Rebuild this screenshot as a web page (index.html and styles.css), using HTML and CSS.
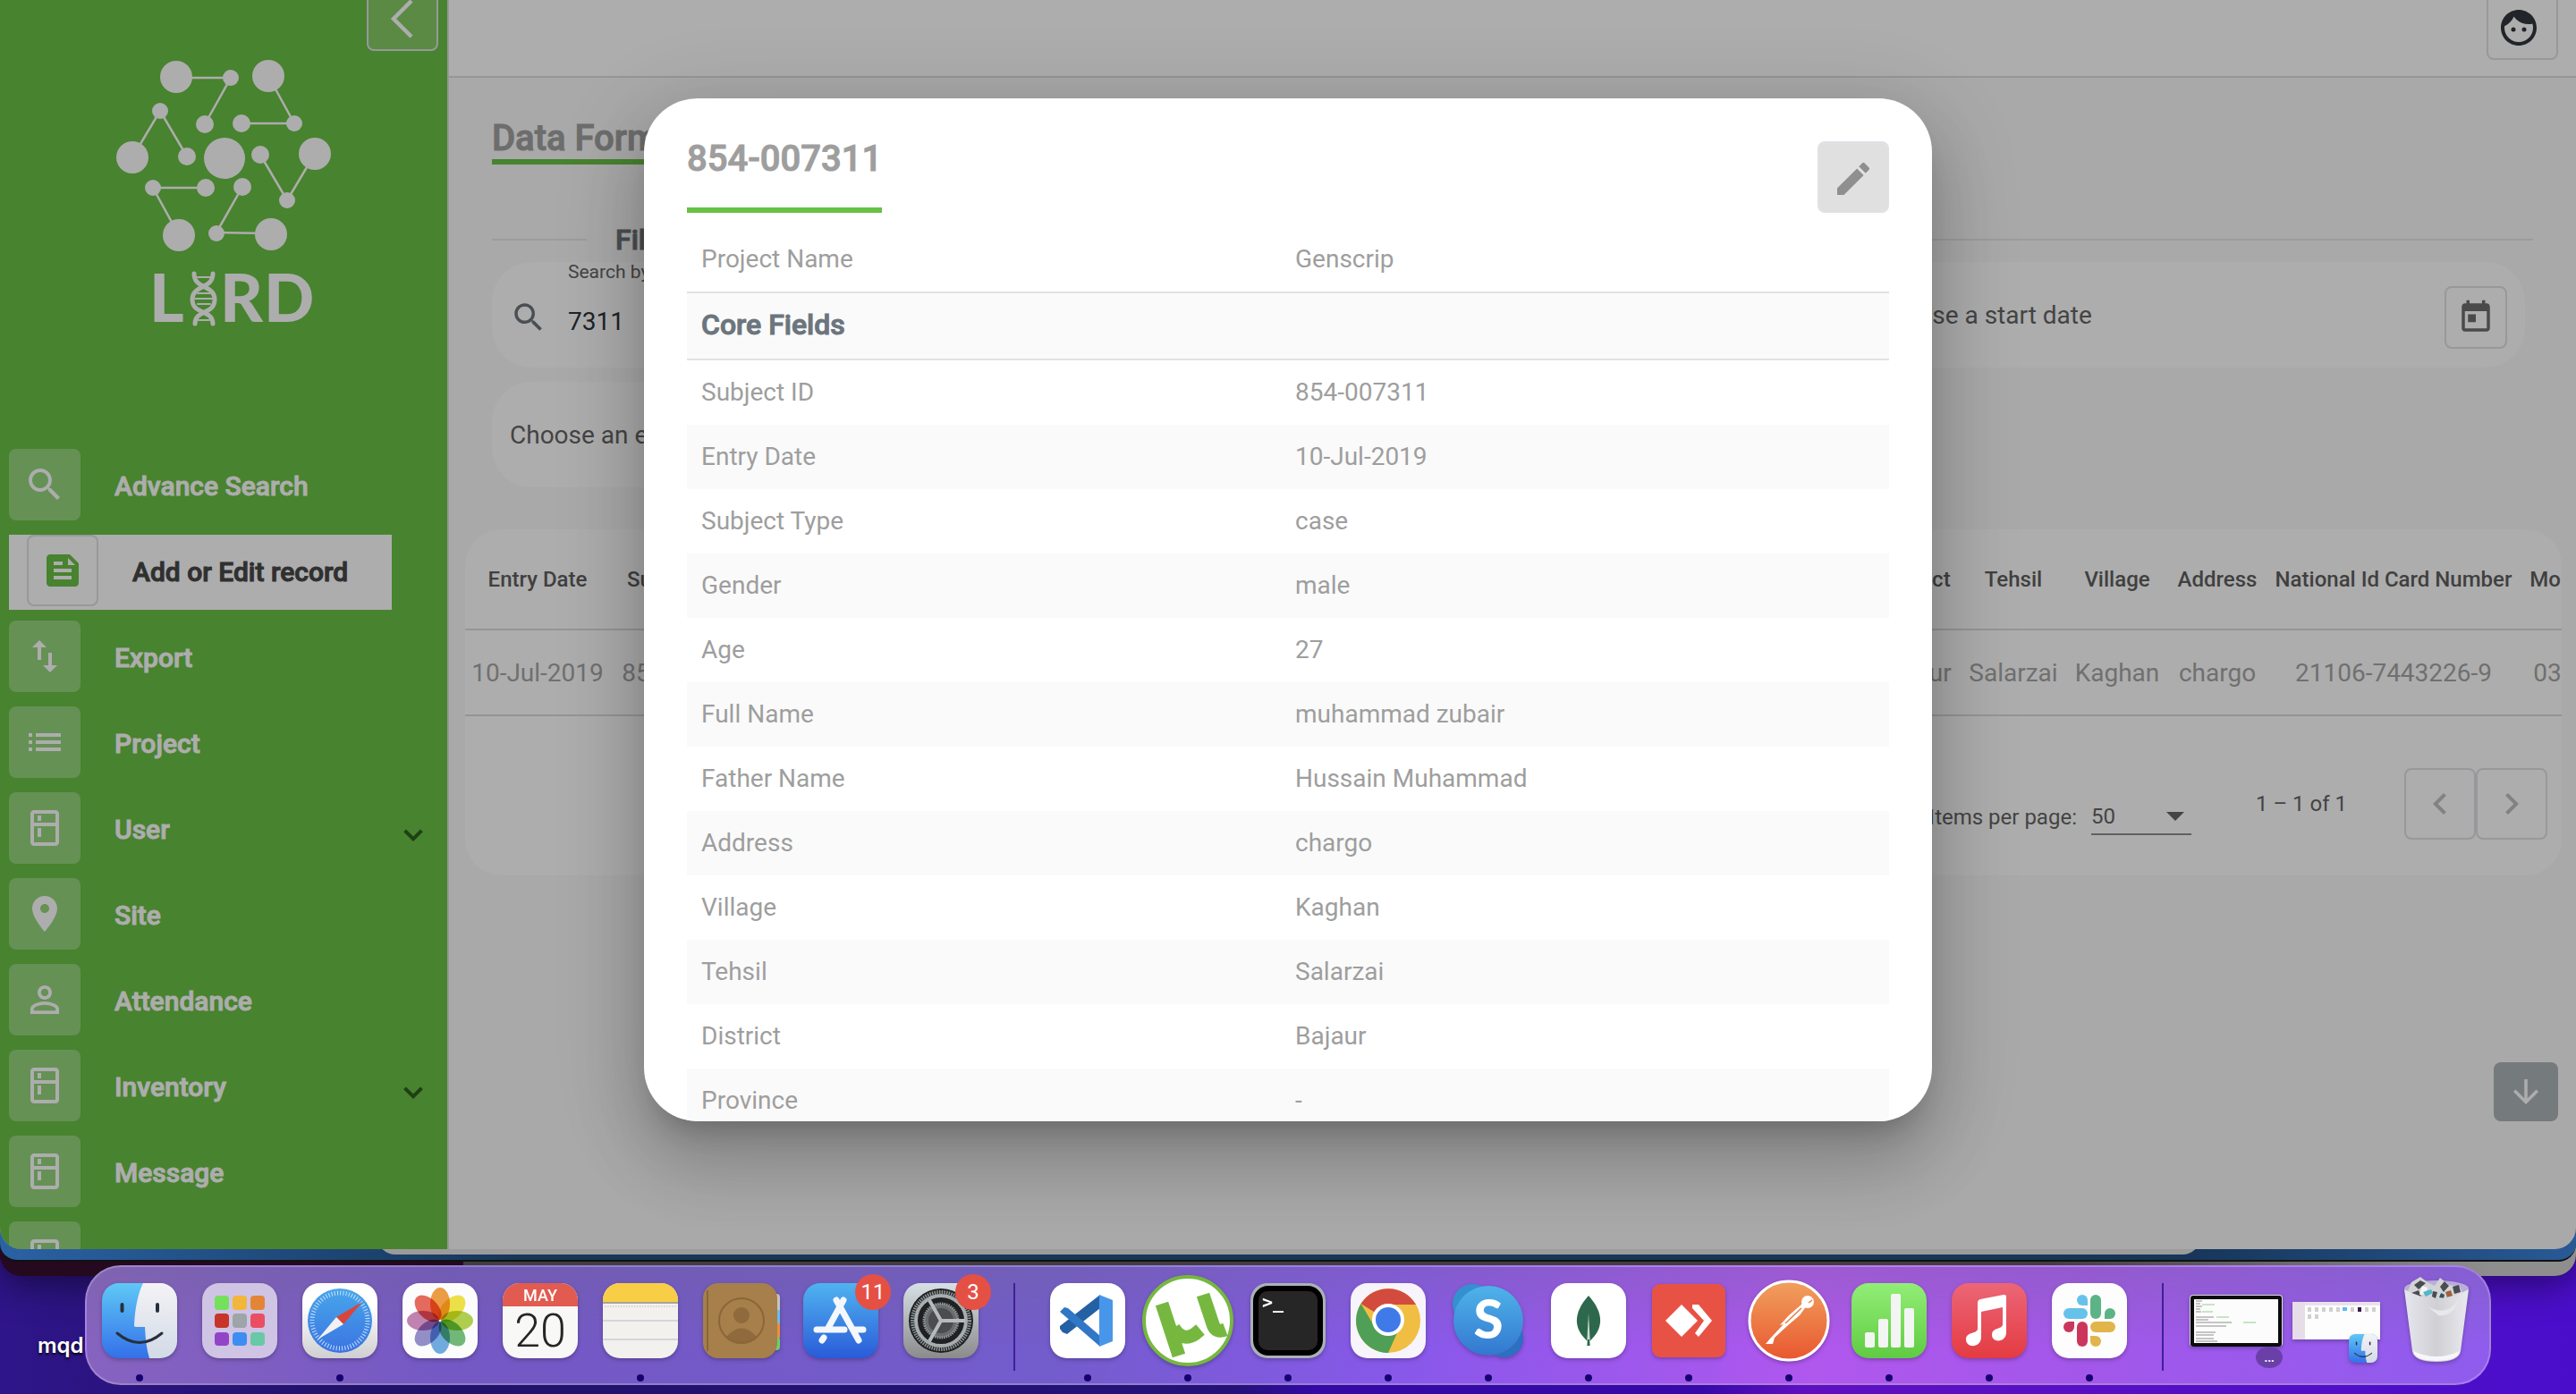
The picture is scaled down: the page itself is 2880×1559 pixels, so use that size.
FILE: index.html
```html
<!DOCTYPE html>
<html lang="en">
<head>
<meta charset="utf-8">
<title>LIRD - Data Forms</title>
<link rel="stylesheet" href="styles.css">
</head>
<body>
<svg class="sprite" aria-hidden="true">
  <symbol id="i-search" viewBox="0 0 24 24"><path d="M15.5 14h-.79l-.28-.27C15.41 12.59 16 11.11 16 9.5 16 5.91 13.09 3 9.5 3S3 5.91 3 9.5 5.91 16 9.5 16c1.61 0 3.09-.59 4.23-1.57l.27.28v.79l5 4.99L20.49 19l-4.99-5zm-6 0C7.01 14 5 11.99 5 9.5S7.01 5 9.5 5 14 7.01 14 9.5 11.99 14 9.5 14z"/></symbol>
  <symbol id="i-feed" viewBox="0 0 24 24"><path d="M16 3H5c-1.1 0-2 .9-2 2v14c0 1.1.9 2 2 2h14c1.1 0 2-.9 2-2V8l-5-5zM7 7h5v2H7V7zm10 10H7v-2h10v2zm0-4H7v-2h10v2zm-2-4V5l4 4h-4z"/></symbol>
  <symbol id="i-export" viewBox="0 0 24 24"><path d="M9 3 5 6.99h3V14h2V6.99h3L9 3zm7 14.01V10h-2v7.01h-3L15 21l4-3.99h-3z"/></symbol>
  <symbol id="i-list" viewBox="0 0 24 24"><path d="M3 13h2v-2H3v2zm0 4h2v-2H3v2zm0-8h2V7H3v2zm4 4h14v-2H7v2zm0 4h14v-2H7v2zM7 7v2h14V7H7z"/></symbol>
  <symbol id="i-kitchen" viewBox="0 0 24 24"><path d="M18 2.01 6 2c-1.1 0-2 .89-2 2v16c0 1.1.9 2 2 2h12c1.1 0 2-.9 2-2V4c0-1.11-.9-1.99-2-1.99zM18 20H6v-9.02h12V20zm0-11H6V4h12v5zM8 5h2v3H8zM8 12h2v5H8z"/></symbol>
  <symbol id="i-place" viewBox="0 0 24 24"><path d="M12 2C8.13 2 5 5.13 5 9c0 5.25 7 13 7 13s7-7.75 7-13c0-3.87-3.13-7-7-7zm0 9.5c-1.38 0-2.5-1.12-2.5-2.5s1.12-2.5 2.5-2.5 2.5 1.12 2.5 2.5-1.12 2.5-2.5 2.5z"/></symbol>
  <symbol id="i-person" viewBox="0 0 24 24"><path d="M12 5.9c1.16 0 2.1.94 2.1 2.1s-.94 2.1-2.1 2.1S9.9 9.16 9.9 8s.94-2.1 2.1-2.1m0 9c2.97 0 6.1 1.46 6.1 2.1v1.1H5.9V17c0-.64 3.13-2.1 6.1-2.1M12 4C9.79 4 8 5.79 8 8s1.79 4 4 4 4-1.79 4-4-1.79-4-4-4zm0 9c-2.67 0-8 1.34-8 4v3h16v-3c0-2.66-5.33-4-8-4z"/></symbol>
  <symbol id="i-face" viewBox="0 0 24 24"><path d="M9 11.75a1.25 1.25 0 1 0 0 2.5 1.25 1.25 0 0 0 0-2.5zm6 0a1.25 1.25 0 1 0 0 2.5 1.25 1.25 0 0 0 0-2.5zM12 2C6.48 2 2 6.48 2 12s4.48 10 10 10 10-4.48 10-10S17.52 2 12 2zm0 18c-4.41 0-8-3.59-8-8 0-.29.02-.58.05-.86 2.36-1.05 4.23-2.98 5.21-5.37a9.974 9.974 0 0 0 10.41 3.97c.21.71.33 1.47.33 2.26 0 4.41-3.59 8-8 8z"/></symbol>
  <symbol id="i-edit" viewBox="0 0 24 24"><path d="M3 17.25V21h3.75L17.81 9.94l-3.75-3.75L3 17.25zM20.71 7.04a.996.996 0 0 0 0-1.41l-2.34-2.34a.996.996 0 0 0-1.41 0l-1.83 1.83 3.75 3.75 1.83-1.83z"/></symbol>
  <symbol id="i-today" viewBox="0 0 24 24"><path d="M19 3h-1V1h-2v2H8V1H6v2H5c-1.11 0-1.99.9-1.99 2L3 19c0 1.1.89 2 2 2h14c1.1 0 2-.9 2-2V5c0-1.1-.9-2-2-2zm0 16H5V8h14v11zM7 10h5v5H7z"/></symbol>
  <symbol id="i-down" viewBox="0 0 24 24"><path d="M12 15.5 6.6 10.1 8 8.7l4 4 4-4 1.4 1.4z"/></symbol>
  <symbol id="finder" viewBox="0 0 84 84">
    <defs>
      <linearGradient id="fb" x2="0" y2="1"><stop stop-color="#5fc8f5"/><stop offset="1" stop-color="#3470ea"/></linearGradient>
      <linearGradient id="fw" x2="0" y2="1"><stop stop-color="#f4f3f6"/><stop offset="1" stop-color="#d2dae6"/></linearGradient>
    </defs>
    <rect width="84" height="84" rx="19" fill="url(#fb)"/>
    <path d="M46 0h19a19 19 0 0 1 19 19v46a19 19 0 0 1-19 19H53c-3-10-4.500-22-5-35H38c-1.500 0-2-.8-2-2C37 28 40 12 46 0z" fill="url(#fw)"/>
    <path d="M22.500 24v7M62 24v7" stroke="#26303c" stroke-width="4" stroke-linecap="round"/>
    <path d="M17 56q25 21 50 0" fill="none" stroke="#26303c" stroke-width="3" stroke-linecap="round"/>
  </symbol>
</svg>

<div class="desktop">
  <div class="win win-dark"></div>
  <div class="win win-grey"></div>
  <div class="win win-blue"></div>
  <div class="win win-strip"></div>
  <span class="desk-label">mqd</span>

  <div class="window">
    <aside class="sidebar">
      <button class="collapse" aria-label="Collapse menu"><svg width="80" height="80" viewBox="0 0 80 80" fill="none" stroke="#adadad" stroke-width="4.500"><path d="M50 24 30 44l20 20"/></svg></button>
      <svg class="logo" width="250" height="310" viewBox="125 60 250 310" role="img" aria-label="LIRD">
        <g stroke="#adadad" stroke-width="2.500" fill="none">
          <path d="M197 87h61l-29 52M300 85l29 53h-59M148 176l31-52 30 51M291 173l30 51 31-52M230 210h-59l29 53M271 209l-29 51 60 1"/>
        </g>
        <g fill="#adadad">
          <circle cx="197" cy="86" r="18"/><circle cx="258" cy="87" r="9"/><circle cx="229" cy="139" r="10"/>
          <circle cx="300" cy="85" r="18"/><circle cx="329" cy="138" r="9"/><circle cx="270" cy="138" r="10"/>
          <circle cx="179" cy="124" r="9"/><circle cx="148" cy="176" r="18"/><circle cx="209" cy="175" r="10"/>
          <circle cx="251" cy="177" r="23"/><circle cx="291" cy="173" r="10"/><circle cx="352" cy="172" r="18"/>
          <circle cx="321" cy="224" r="9"/><circle cx="171" cy="210" r="9"/><circle cx="230" cy="210" r="10"/>
          <circle cx="200" cy="263" r="18"/><circle cx="271" cy="209" r="10"/><circle cx="242" cy="261" r="9"/>
          <circle cx="303" cy="262" r="18"/>
        </g>
        <g fill="none" stroke="#adadad" stroke-width="5" stroke-linecap="round">
          <path d="M217 306c0 18 23 12 23 29s-22 11-22 27M238 306c0 18-23 12-23 29s23 11 23 27"/>
          <path d="M221 310h14M221 328h14M218 334h19M221 340h14M222 358h12" stroke-width="2"/>
        </g>
        <g class="logo-text"><text x="167" y="360">L</text><text x="246" y="360">R</text><text x="295" y="360">D</text></g>
      </svg>
      <nav>
        <ul class="menu">
          <li><a href="#"><span class="tile"><svg><use href="#i-search"/></svg></span>Advance Search</a></li>
          <li><a href="#" class="active"><span class="tile"><svg><use href="#i-feed"/></svg></span>Add or Edit record</a></li>
          <li><a href="#"><span class="tile"><svg><use href="#i-export"/></svg></span>Export</a></li>
          <li><a href="#"><span class="tile"><svg><use href="#i-list"/></svg></span>Project</a></li>
          <li><a href="#"><span class="tile"><svg><use href="#i-kitchen"/></svg></span>User<svg class="caret"><use href="#i-down"/></svg></a></li>
          <li><a href="#"><span class="tile"><svg><use href="#i-place"/></svg></span>Site</a></li>
          <li><a href="#"><span class="tile"><svg><use href="#i-person"/></svg></span>Attendance</a></li>
          <li><a href="#"><span class="tile"><svg><use href="#i-kitchen"/></svg></span>Inventory<svg class="caret"><use href="#i-down"/></svg></a></li>
          <li><a href="#"><span class="tile"><svg><use href="#i-kitchen"/></svg></span>Message</a></li>
          <li><a href="#" aria-label="More"><span class="tile"><svg><use href="#i-kitchen"/></svg></span></a></li>
        </ul>
      </nav>
    </aside>

    <main class="main">
      <header class="topbar"><button class="avatar" aria-label="Account"><svg><use href="#i-face"/></svg></button></header>
      <div class="page">
        <h1 class="title">Data Forms</h1>
        <div class="legend"><h2>Filters</h2></div>
        <form class="filters">
          <div class="field">
            <svg class="lens"><use href="#i-search"/></svg>
            <div class="stack"><label for="q">Search by Id</label><input id="q" type="text" value="7311"></div>
          </div>
          <div class="field"><input type="text" aria-label="Status" placeholder="Status"></div>
          <div class="field"><input type="text" aria-label="Start date" placeholder="Choose a start date"><button type="button" class="cal" aria-label="Open calendar"><svg><use href="#i-today"/></svg></button></div>
          <div class="field"><input type="text" aria-label="End date" placeholder="Choose an end date"></div>
        </form>
        <section class="card">
          <table class="records">
            <colgroup><col class="c-date"><col class="c-id"><col><col><col><col><col><col><col class="c-district"><col class="c-tehsil"><col class="c-village"><col class="c-address"><col class="c-nic"><col class="c-mobile"></colgroup>
            <thead><tr><th>Entry Date</th><th>Subject Type</th><th>Subject ID</th><th>Gender</th><th>Age</th><th>Full Name</th><th>Father Name</th><th>Province</th><th>District</th><th>Tehsil</th><th>Village</th><th>Address</th><th>National Id Card Number</th><th>Mobile Number</th></tr></thead>
            <tbody><tr><td>10-Jul-2019</td><td>854-007311</td><td>case</td><td>male</td><td>27</td><td>muhammad</td><td>Hussain</td><td>-</td><td>Bajaur</td><td>Salarzai</td><td>Kaghan</td><td>chargo</td><td>21106-7443226-9</td><td>0300000000</td></tr></tbody>
          </table>
          <div class="pager">
            <div class="per-page"><label for="pp">Items per page:</label>
              <div class="select"><select id="pp"><option>50</option></select><span class="arrow"></span></div></div>
            <span class="range">1 – 1 of 1</span>
            <div class="steps">
              <button aria-label="Previous page"><svg width="48" height="48" viewBox="0 0 24 24"><path d="M15.410 7.410 14 6l-6 6 6 6 1.410-1.410L10.830 12z"/></svg></button>
              <button aria-label="Next page"><svg width="48" height="48" viewBox="0 0 24 24"><path d="M10 6 8.590 7.410 13.170 12l-4.580 4.590L10 18l6-6z"/></svg></button>
            </div>
          </div>
        </section>
      </div>
    </main>

    <button class="fab" aria-label="Scroll down"><svg width="48" height="48" viewBox="0 0 24 24"><path d="m20 12-1.410-1.410L13 16.170V4h-2v12.170l-5.580-5.590L4 12l8 8z"/></svg></button>

    <div class="dialog" role="dialog" aria-labelledby="dlg">
      <div class="dialog-head"><h2 id="dlg">854-007311</h2><button class="edit" aria-label="Edit"><svg><use href="#i-edit"/></svg></button></div>
      <table class="details">
        <tbody>
          <tr><th>Project Name</th><td>Genscrip</td></tr>
          <tr class="group"><th colspan="2">Core Fields</th></tr>
          <tr><th>Subject ID</th><td>854-007311</td></tr>
          <tr><th>Entry Date</th><td>10-Jul-2019</td></tr>
          <tr><th>Subject Type</th><td>case</td></tr>
          <tr><th>Gender</th><td>male</td></tr>
          <tr><th>Age</th><td>27</td></tr>
          <tr><th>Full Name</th><td>muhammad zubair</td></tr>
          <tr><th>Father Name</th><td>Hussain Muhammad</td></tr>
          <tr><th>Address</th><td>chargo</td></tr>
          <tr><th>Village</th><td>Kaghan</td></tr>
          <tr><th>Tehsil</th><td>Salarzai</td></tr>
          <tr><th>District</th><td>Bajaur</td></tr>
          <tr><th>Province</th><td>-</td></tr>
        </tbody>
      </table>
    </div>
  </div>

  <div class="dock">
    <div class="app on"><svg viewBox="0 0 84 84"><use href="#finder"/></svg></div>
    <div class="app"><svg viewBox="0 0 84 84"><rect width="84" height="84" rx="19" fill="#cfc4e4"/>
      <rect x="14" y="14" width="16" height="16" rx="4" fill="#74e05c"/><rect x="34" y="14" width="16" height="16" rx="4" fill="#f2b63c"/><rect x="54" y="14" width="16" height="16" rx="4" fill="#e38537"/>
      <rect x="14" y="34" width="16" height="16" rx="4" fill="#c7342a"/><rect x="34" y="34" width="16" height="16" rx="4" fill="#9ea4a8"/><rect x="54" y="34" width="16" height="16" rx="4" fill="#ea4e63"/>
      <rect x="14" y="55" width="16" height="15" rx="4" fill="#9244c8"/><rect x="34" y="55" width="16" height="15" rx="4" fill="#3d8df2"/><rect x="54" y="55" width="16" height="15" rx="4" fill="#69c8a6"/></svg></div>
    <div class="app on"><svg viewBox="0 0 84 84">
      <defs><linearGradient id="sw" x2="0" y2="1"><stop offset=".3" stop-color="#fff"/><stop offset="1" stop-color="#cfcfd1"/></linearGradient><linearGradient id="sb" x2="0" y2="1"><stop stop-color="#48a6ea"/><stop offset="1" stop-color="#3a74e2"/></linearGradient></defs>
      <rect width="84" height="84" rx="19" fill="url(#sw)"/><circle cx="42" cy="42" r="36" fill="url(#sb)"/>
      <circle cx="42" cy="42" r="31" fill="none" stroke="#c9e0f8" stroke-width="5" stroke-dasharray="1 2.246"/>
      <path d="M67 21 38 38l8 8z" fill="#d8463a"/><path d="M17 63 38 38l8 8z" fill="#f1f1f1"/></svg></div>
    <div class="app"><svg viewBox="0 0 84 84"><rect width="84" height="84" rx="19" fill="#fcfcfc"/>
      <g class="petals"><ellipse cx="42" cy="23" rx="11" ry="18" fill="#ee9430"/><ellipse cx="42" cy="23" rx="11" ry="18" fill="#efdf35" transform="rotate(45 42 42)"/><ellipse cx="42" cy="23" rx="11" ry="18" fill="#a9cc3d" transform="rotate(90 42 42)"/><ellipse cx="42" cy="23" rx="11" ry="18" fill="#62b36a" transform="rotate(135 42 42)"/><ellipse cx="42" cy="23" rx="11" ry="18" fill="#62a3dc" transform="rotate(180 42 42)"/><ellipse cx="42" cy="23" rx="11" ry="18" fill="#8b84c4" transform="rotate(225 42 42)"/><ellipse cx="42" cy="23" rx="11" ry="18" fill="#bd76ab" transform="rotate(270 42 42)"/><ellipse cx="42" cy="23" rx="11" ry="18" fill="#e65a4c" transform="rotate(315 42 42)"/></g></svg></div>
    <div class="app"><svg viewBox="0 0 84 84"><rect width="84" height="84" rx="19" fill="#f8f8f7"/><path d="M0 26v-7A19 19 0 0 1 19 0h46a19 19 0 0 1 19 19v7z" fill="#e15b50"/><text class="t-may" x="42" y="20">MAY</text><text class="t-day" x="42" y="71">20</text></svg></div>
    <div class="app on"><svg viewBox="0 0 84 84"><rect width="84" height="84" rx="19" fill="#f2f1ee"/><path d="M0 21v-2A19 19 0 0 1 19 0h46a19 19 0 0 1 19 19v2z" fill="#f8ce46"/><path d="M0 22h84" stroke="#a9a39a" stroke-width="2"/><path d="M2 26h80" stroke="#bdbbb8" stroke-dasharray="1.500 1.500"/><path d="M0 42h84M0 63h84" stroke="#d6d5d9" stroke-width="2"/></svg></div>
    <div class="app"><svg viewBox="0 0 84 84"><rect x="70" y="12" width="16" height="22" rx="4" fill="#c4c4c0"/><rect x="70" y="30" width="16" height="16" fill="#6cbde8"/><rect x="70" y="45" width="16" height="16" fill="#ec8f37"/><rect x="70" y="60" width="16" height="15" rx="4" fill="#6fcf6b"/><rect width="83" height="84" rx="17" fill="#a67f4b"/><path d="M5 8v68" stroke="#8a6638" stroke-width="2"/><g fill="#8f6a3c"><circle cx="43" cy="36" r="9"/><path d="M26 60q17-19 34 0-17 14-34 0z"/></g><circle cx="43" cy="42" r="25" fill="none" stroke="#8a6638" stroke-width="2"/></svg></div>
    <div class="app"><svg viewBox="0 0 84 84"><defs><linearGradient id="as" x2="0" y2="1"><stop stop-color="#50b3f0"/><stop offset="1" stop-color="#2a5bd8"/></linearGradient></defs><rect width="84" height="84" rx="19" fill="url(#as)"/><g stroke="#f4f7fb" stroke-width="7" stroke-linecap="round"><path d="M45 19 28 50M37 19l25 45M15 52h31M58 52h9M23 61l-2 3"/></g></svg><span class="badge">11</span></div>
    <div class="app"><svg viewBox="0 0 84 84"><defs><linearGradient id="sp" x2="0" y2="1"><stop stop-color="#d7e0e6"/><stop offset="1" stop-color="#8b8b8b"/></linearGradient></defs><rect width="84" height="84" rx="19" fill="url(#sp)"/><circle cx="42" cy="42" r="36" fill="#1f2122"/><circle cx="42" cy="42" r="32" fill="none" stroke="#8f9698" stroke-width="4" stroke-dasharray="1.500 1.200"/><circle cx="42" cy="42" r="28" fill="none" stroke="#a7adaf" stroke-width="4"/><circle cx="42" cy="42" r="19" fill="#6a6d6e" stroke="#929799" stroke-width="3" stroke-dasharray="1.500 1"/><circle cx="42" cy="42" r="14" fill="#4a4c4d"/><path d="M42 42h27M42 42 29 19M42 42 29 65" stroke="#b5bbbd" stroke-width="4"/></svg><span class="badge">3</span></div>
    <span class="split"></span>
    <div class="app on"><svg viewBox="0 0 84 84"><rect width="84" height="84" rx="19" fill="#fff"/><path d="M56 13v15L19 57l-5-2-3-4v-3z" fill="#2461a4"/><path d="M11 32l5-5 4 1 36 31v12z" fill="#3177c6"/><path d="M55 13l15 6v46l-15 6z" fill="#4896ea"/></svg></div>
    <div class="app on"><svg class="over" viewBox="0 0 102 102"><circle cx="51" cy="51" r="49" fill="#fff" stroke="#76b83f" stroke-width="4"/><path d="M20 33 39 91M33 60q10 16 24 7l6-5M66 23l11 33q3 10 14 6" transform="translate(2 -1)" fill="none" stroke="#76b83f" stroke-width="15"/></svg></div>
    <div class="app on"><svg viewBox="0 0 84 84"><rect width="84" height="84" rx="19" fill="#a9b3b6"/><rect x="3" y="3" width="78" height="78" rx="17" fill="#000"/><rect x="9" y="9" width="66" height="66" rx="10" fill="#262626"/><text class="t-term" x="13" y="28">&gt;_</text></svg></div>
    <div class="app on"><svg viewBox="0 0 84 84"><rect width="84" height="84" rx="19" fill="#f7f4fc"/><circle cx="42" cy="42" r="36" fill="#f0be42"/><path d="M42 42 11.500 23a36 36 0 0 1 61.500 1H42z" fill="#d34b3e"/><path d="M42 78A36 36 0 0 1 11.500 23L27 49l28 0z" fill="#4f9f56"/><circle cx="42" cy="41" r="18" fill="#fff"/><circle cx="42" cy="41" r="14" fill="#4079e8"/></svg></div>
    <div class="app on"><svg viewBox="0 0 84 84"><defs><linearGradient id="sk" x2="0" y2="1"><stop stop-color="#4fb3ea"/><stop offset="1" stop-color="#3377d0"/></linearGradient></defs><circle cx="24" cy="23" r="22" fill="#3490d0"/><circle cx="60" cy="62" r="21" fill="#2d6fc0"/><circle cx="42" cy="42" r="39" fill="url(#sk)"/><text class="t-skype" x="42" y="62">S</text></svg></div>
    <div class="app on"><svg viewBox="0 0 84 84"><rect width="84" height="84" rx="19" fill="#fff"/><path d="M42 14c18 20 17 38 0 52-17-14-18-32 0-52z" fill="#2d684c"/><path d="M42 34l2 36h-4z" fill="#c9ddd0"/><path d="M41 63h2l.5 7h-3z" fill="#2d684c"/></svg></div>
    <div class="app on"><svg viewBox="0 0 84 84"><rect x="1" y="1" width="82" height="82" rx="9" fill="#e85244"/><path d="M16 42 34 24l18 18-18 18z" fill="#fff"/><path d="M46 24h7l15 18-15 18-4-4 10-14-13-14z" fill="#fff"/></svg></div>
    <div class="app on"><svg class="over" viewBox="0 0 102 102"><defs><linearGradient id="pm" x2="0" y2="1"><stop stop-color="#f0a05e"/><stop offset="1" stop-color="#e9572f"/></linearGradient></defs><circle cx="51" cy="51" r="44" fill="url(#pm)" stroke="#fff" stroke-width="3"/><g fill="#fff"><circle cx="72" cy="30" r="7"/><path d="M66 32 51 45 41 56l4-1-15 16-5 6h8l2-7 14-13 14-12 8-11z"/></g><path d="M47 54l18-17M73 31l4-3" stroke="#ea7a45" stroke-width="1.500"/></svg></div>
    <div class="app on"><svg viewBox="0 0 84 84"><defs><linearGradient id="nu" x2="0" y2="1"><stop stop-color="#92ee76"/><stop offset="1" stop-color="#5fcb42"/></linearGradient></defs><rect width="84" height="84" rx="19" fill="url(#nu)"/><g fill="#f3f5f3"><rect x="15" y="55" width="11" height="17" rx="2"/><rect x="30" y="40" width="11" height="32" rx="2"/><rect x="44" y="12" width="11" height="60" rx="2"/><rect x="59" y="28" width="11" height="44" rx="2"/></g></svg></div>
    <div class="app on"><svg viewBox="0 0 84 84"><defs><linearGradient id="mu" x2="0" y2="1"><stop stop-color="#ec6676"/><stop offset="1" stop-color="#e43b42"/></linearGradient></defs><rect width="84" height="84" rx="19" fill="url(#mu)"/><path d="M29 22q0-3 3-4l26-5q3-.5 3 2v40c0 12-16 12-16 3 0-9 12-6 12-12V27l-24 5v28c0 13-17 13-17 3 0-9 13-6 13-12z" fill="#fff"/></svg></div>
    <div class="app on"><svg viewBox="0 0 84 84"><rect width="84" height="84" rx="19" fill="#fdfdfd"/><g fill="#66c2ea"><path d="M40 25h-6a6 6 0 1 1 6-6z"/><rect x="13" y="28" width="27" height="12" rx="6"/></g><g fill="#5cb386"><rect x="43" y="13" width="12" height="27" rx="6"/><path d="M59 40v-6a6 6 0 1 1 6 6z"/></g><g fill="#cd365c"><path d="M25 43v6a6 6 0 1 1-6-6z"/><rect x="28" y="43" width="12" height="28" rx="6"/></g><g fill="#e1b44c"><rect x="43" y="43" width="28" height="12" rx="6"/><path d="M43 59h6a6 6 0 1 1-6 6z"/></g></svg></div>
    <span class="split"></span>
    <div class="app"><svg class="wide" viewBox="0 0 104 84"><rect y="13" width="104" height="58" rx="4" fill="#d6e0dd"/><rect x="1" y="14" width="102" height="57" rx="3" fill="#0b0d0c"/><rect x="5" y="18" width="94" height="49" fill="#fcfcfc"/><path d="M7 20h7M7 23h5M7 26h7M7 29h5M7 32h6M7 38h20M7 41h14M7 44h40M7 48h34M7 55h22M7 58h20M7 62h20M7 65h24" stroke="#8d8d8d" stroke-width="1"/><path d="M14 24h14M14 32h12M30 38h14M60 44h14" stroke="#8fd08a" stroke-width="1"/></svg><span class="bubble">…</span></div>
    <div class="app"><svg class="wide" viewBox="0 0 104 84"><rect x="3" y="21" width="98" height="42" fill="#fdfdfd"/><path d="M3 21h98v4H3z" fill="#e9e2ec"/><path d="M3 21h14v42H3z" fill="#e6dde8"/><g fill="#d0d0d2"><path d="M20 27h4v5h-4zM28 27h4v5h-4zM36 27h4v5h-4zM44 27h4v5h-4zM52 27h4v5h-4zM68 27h4v5h-4zM84 27h4v5h-4zM92 27h4v5h-4zM20 35h4v5h-4zM28 35h4v5h-4z"/></g><path d="M59 27h5v4h-5z" fill="#63b9ee"/><path d="M76 27h4v5h-4z" fill="#3a1a4c"/></svg><svg class="mini" viewBox="0 0 84 84"><use href="#finder"/></svg></div>
    <div class="app"><svg viewBox="0 0 84 84"><defs><linearGradient id="tr" x2="1" y2="0"><stop stop-color="#e6e6ee"/><stop offset=".5" stop-color="#cfcfd4"/><stop offset="1" stop-color="#e9e9ef"/></linearGradient></defs><ellipse cx="42" cy="6" rx="36" ry="9" fill="#b9aed8"/><path d="M10 9 14-1l10-6 8 6 8 4 6-9 10 8 12 2 4 9-8 9-22 2-22-4z" fill="#d3d4d6"/><path d="m17 2 7-5 6 3-8 7zM46 4l5-6 5 5-6 7zM60 4l7-2 2 8-7 2zM14 11l8-3 3 7-6 1zM38 9l5 1-2 7-4-2z" fill="#494c50"/><path d="m26 3 6 2-2 7-7 1z" fill="#f5f5f5"/><path d="M27 10l9-3 2 4-8 4z" fill="#4fb7c9"/><path d="M52 10l6-2 2 6-6 2z" fill="#a0603c"/><path d="M47 11l4 2-1 4-5-1z" fill="#2f5560"/><path d="M6 7q36 20 72 0l-9 69q-2 12-27 12T15 76z" fill="url(#tr)"/><path d="M16 76q26 12 52 0-3 11-26 11t-26-11z" fill="#f7f7fa"/><path d="M32 26q20 12 34-6-6 18-22 16z" fill="#e8e8ec"/></svg></div>
  </div>
</div>
</body>
</html>
```

FILE: styles.css
```css
* { box-sizing: border-box; }

body {
  margin: 0;
  font-family: Roboto, "Liberation Sans", sans-serif;
  font-size: 28px;
  color: #444;
}

button { padding: 0; margin: 0; font: inherit; cursor: pointer; }
h1, h2 { margin: 0; }
h1, h2, .group th, .menu a { -webkit-text-stroke: 1px currentColor; }
.sprite { position: absolute; width: 0; height: 0; }

/* Desktop and the windows stacked behind the browser */
.desktop {
  position: relative;
  height: 100vh;
  overflow: hidden;
  background: linear-gradient(90deg, #2f158a 0, #20126a 14%, #24127a 48%, #3409a4 51%, #3609a8 66%, #5e10c0 70%, #4a0ecb 100%);
}
.win { position: absolute; top: 0; left: 0; right: 0; }
.win-dark { bottom: 132px; background: #24091f; border-radius: 0 0 24px 24px; box-shadow: 0 8px 40px rgba(0, 0, 0, .5); }
.win-grey { bottom: 132px; left: 18%; background: linear-gradient(90deg, #3f3f3f 75%, #8e8e8e 96%); border-radius: 0 0 24px 0; }
.win-blue { bottom: 148px; background: linear-gradient(90deg, #2a62a4 0, #17365a 20%, #17365a 85%, #285a96 100%); border-bottom: 2px solid #111; border-radius: 0 0 20px 20px; }
.win-strip { bottom: 156px; left: 422px; right: 420px; background: #9b9b9b; border-radius: 0 0 20px 20px; }
.desk-label { position: absolute; left: 42px; bottom: 40px; color: #fff; font: 600 24px/28px Inter, sans-serif; text-shadow: 0 2px 3px #000; }

.window {
  position: relative;
  display: flex;
  height: calc(100vh - 162px);
  overflow: hidden;
  border-radius: 0 0 24px 24px;
  background: #a9a9a9;
}

/* Sidebar */
.sidebar {
  flex: none;
  display: flex;
  flex-direction: column;
  width: 502px;
  border-right: 2px solid #97979b;
  background: #48832f;
}
.collapse {
  align-self: flex-end;
  flex: none;
  width: 80px;
  height: 80px;
  margin: -23px 10px 0 0;
  border: 2px solid #98989c;
  border-radius: 8px;
  background: #5b8a45;
}
.collapse svg { display: block; margin: -2px; }
.logo { flex: none; margin: 3px 0 0 125px; overflow: visible; }
.logo-text { font: 900 74px Lato, sans-serif; fill: #adadad; }
.menu { list-style: none; margin: 132px 0 0; padding: 0 0 0 10px; }
.menu li { height: 96px; }
.menu a {
  display: flex;
  align-items: flex-start;
  gap: 38px;
  width: 478px;
  height: 80px;
  color: #adadad;
  font-weight: 500;
  font-size: 30px;
  line-height: 83px;
  text-decoration: none;
}
.menu .active { width: 428px; height: 84px; padding-left: 20px; background: #adadad; color: #303030; }
.tile { display: grid; place-items: center; flex: none; width: 80px; height: 80px; border-radius: 8px; background: #659155; }
.active .tile { border: 2px solid #98989c; background: none; }
.tile svg { width: 48px; height: 48px; fill: #adadad; }
.active .tile svg { fill: #48832f; }
.menu .caret { width: 48px; height: 48px; margin: 24px 2px 0 auto; fill: #1f3f14; }

/* Main column */
.main { flex: 1; min-width: 0; }
.topbar { display: flex; justify-content: flex-end; height: 87px; padding-right: 20px; border-bottom: 2px solid #969696; background: #adadad; }
.avatar { display: grid; place-items: center; width: 80px; height: 80px; margin-top: -13px; padding-right: 8px; border: 2px solid #98989c; border-radius: 8px; background: none; }
.avatar svg { width: 48px; height: 48px; margin-top: 8px; fill: #212529; }
.page { padding: 44px 16px 0 18px; }
.title { width: fit-content; margin-left: 30px; border-bottom: 6px solid #48832f; color: #6d6d6d; font-weight: 500; font-size: 40px; line-height: 47px; }
.legend { display: flex; align-items: center; gap: 32px; margin: 64px 32px 5px 30px; }
.legend::before, .legend::after { content: ""; width: 106px; height: 2px; background: #9c9c9c; }
.legend::after { flex: 1; }
.legend h2 { color: #4a4f54; font-weight: 500; font-size: 32px; line-height: 40px; }

.filters { display: grid; grid-template-columns: repeat(3, 1fr); gap: 16px 14px; margin: 0 41px 47px 30px; }
.field { display: flex; align-items: center; height: 118px; padding: 0 20px; border-radius: 44px; background: #adadad; }
.field input { flex: 1; min-width: 0; padding: 0; border: 0; outline: 0; background: none; color: #444; font: 28px Roboto, sans-serif; }
.field input::placeholder { color: #444; opacity: 1; }
.lens { width: 42px; height: 42px; margin: 6px 23px 0 0; fill: #4a4f54; }
.stack { display: flex; flex-direction: column; align-self: flex-start; }
.stack label { font-size: 21px; line-height: 22px; }
.stack input { flex: none; height: 88px; color: #202328; }
.cal { display: grid; place-items: center; width: 70px; height: 70px; margin-top: 6px; border: 2px solid #98989c; border-radius: 8px; background: none; }
.cal svg { width: 42px; height: 42px; fill: #4a4a4a; }

.card { overflow: hidden; border-radius: 40px; background: #adadad; }
.records { width: calc(100% + 140px); table-layout: fixed; border-collapse: collapse; text-align: center; white-space: nowrap; }
.records th, .records td { overflow: hidden; padding: 0; border-bottom: 2px solid #959595; }
.records th { height: 112px; color: #404040; font-weight: 500; font-size: 24px; }
.records td { height: 96px; color: #707070; }
.c-date { width: 162px; }
.c-id { width: 176px; }
.c-district { width: 100px; }
.c-tehsil { width: 118px; }
.c-village { width: 114px; }
.c-address { width: 110px; }
.c-nic { width: 284px; }
.c-mobile { width: 186px; }

.pager { display: flex; align-items: center; justify-content: flex-end; padding: 58px 16px 40px; font-size: 24px; }
.per-page { display: flex; align-items: center; gap: 16px; margin: 30px 72px 0 0; }
.select { display: flex; align-items: center; width: 112px; border-bottom: 2px solid #606060; }
.select select { flex: 1; height: 38px; padding: 0; border: 0; outline: 0; appearance: none; background: none; color: #444; font: 24px Roboto, sans-serif; }
.arrow { margin-right: 8px; border: 10px solid transparent; border-top-color: #444; border-bottom: 0; }
.range { margin-right: 64px; }
.steps { display: flex; }
.steps button { display: grid; place-items: center; width: 80px; height: 80px; border: 2px solid #98989c; border-radius: 8px; background: none; }
.steps svg { fill: #828282; }

.fab { display: grid; place-items: center; position: absolute; right: 20px; bottom: 143px; width: 72px; height: 66px; border: 0; border-radius: 8px; background: #757a7d; }
.fab svg { width: 42px; height: 42px; fill: #adadad; }

/* Record dialog */
.dialog {
  position: absolute;
  top: 110px;
  bottom: 143px;
  left: 25%;
  width: 50%;
  overflow: hidden;
  padding: 48px 48px 0;
  border-radius: 60px;
  background: #fff;
  box-shadow: 0 22px 30px -14px rgba(0, 0, 0, .2), 0 48px 76px 6px rgba(0, 0, 0, .14), 0 18px 92px 16px rgba(0, 0, 0, .12);
}
.dialog-head { display: flex; justify-content: space-between; height: 80px; margin-bottom: 16px; }
.dialog-head h2 { height: 80px; border-bottom: 6px solid #68c045; color: #9e9e9e; font-weight: 500; font-size: 40px; line-height: 40px; }
.edit { display: grid; place-items: center; width: 80px; height: 80px; border: 2px solid #dee2e6; border-radius: 8px; background: #e0e0e0; }
.edit svg { width: 48px; height: 48px; margin-top: 4px; fill: #8f8f8f; }
.details { width: 100%; border-collapse: separate; border-spacing: 0; text-align: left; color: #9e9e9e; }
.details th, .details td { height: 72px; padding: 0 16px; font-weight: 400; line-height: 36px; }
.details th { width: 664px; }
.details tr:nth-child(even) { background: #fafafa; }
.details .group th { height: 77px; padding-bottom: 3px; border: solid #dee2e6; border-width: 2px 0; color: #6c757d; font-weight: 500; font-size: 32px; }

/* Dock */
.dock {
  position: absolute;
  left: 50%;
  bottom: 10px;
  transform: translateX(-50%);
  display: flex;
  padding: 18px 3px 0;
  height: 134px;
  border: 2px solid rgba(255, 255, 255, .22);
  border-radius: 40px;
  background: linear-gradient(180deg, rgba(110, 100, 140, .3), rgba(110, 80, 230, 0) 70%), linear-gradient(90deg, #8763c0 0, #7458c4 15%, #735ccc 40%, #8858ea 55%, #b057ee 72%, #a457ea 82%, #8f5cee 100%);
}
.app { position: relative; display: flex; flex-direction: column; align-items: center; width: 112px; height: 110px; }
.app svg { flex: none; width: 84px; height: 84px; overflow: visible; filter: drop-shadow(0 2px 2px rgba(0, 0, 0, .25)); }
.app .over { width: 102px; height: 102px; margin: -9px; }
.app .wide { width: 104px; }
.petals ellipse { mix-blend-mode: multiply; opacity: .9; }
.on::after { content: ""; width: 8px; height: 8px; margin-top: auto; border-radius: 50%; background: #150070; }
.split { width: 52px; height: 98px; background: linear-gradient(#3f1f98, #3f1f98) center / 2px 100% no-repeat; }
.badge { position: absolute; top: -10px; right: 0; width: 40px; height: 40px; border-radius: 50%; background: #e55045; color: #fff; font-size: 24px; line-height: 40px; text-align: center; }
.bubble { position: absolute; top: 71px; right: 4px; width: 30px; height: 24px; border-radius: 50%; background: #6b3fa8; color: #fff; font-size: 18px; line-height: 22px; text-align: center; }
.app .mini { position: absolute; top: 57px; right: 10px; width: 32px; height: 32px; }
.t-may { font: 500 18px Roboto, sans-serif; fill: #fff; text-anchor: middle; }
.t-day { font: 300 52px Roboto, sans-serif; fill: #262626; text-anchor: middle; }
.t-term { font: 700 20px "DejaVu Sans Mono", monospace; fill: #fff; }
.t-skype { font: 900 60px Lato, sans-serif; fill: #fff; text-anchor: middle; }
```
